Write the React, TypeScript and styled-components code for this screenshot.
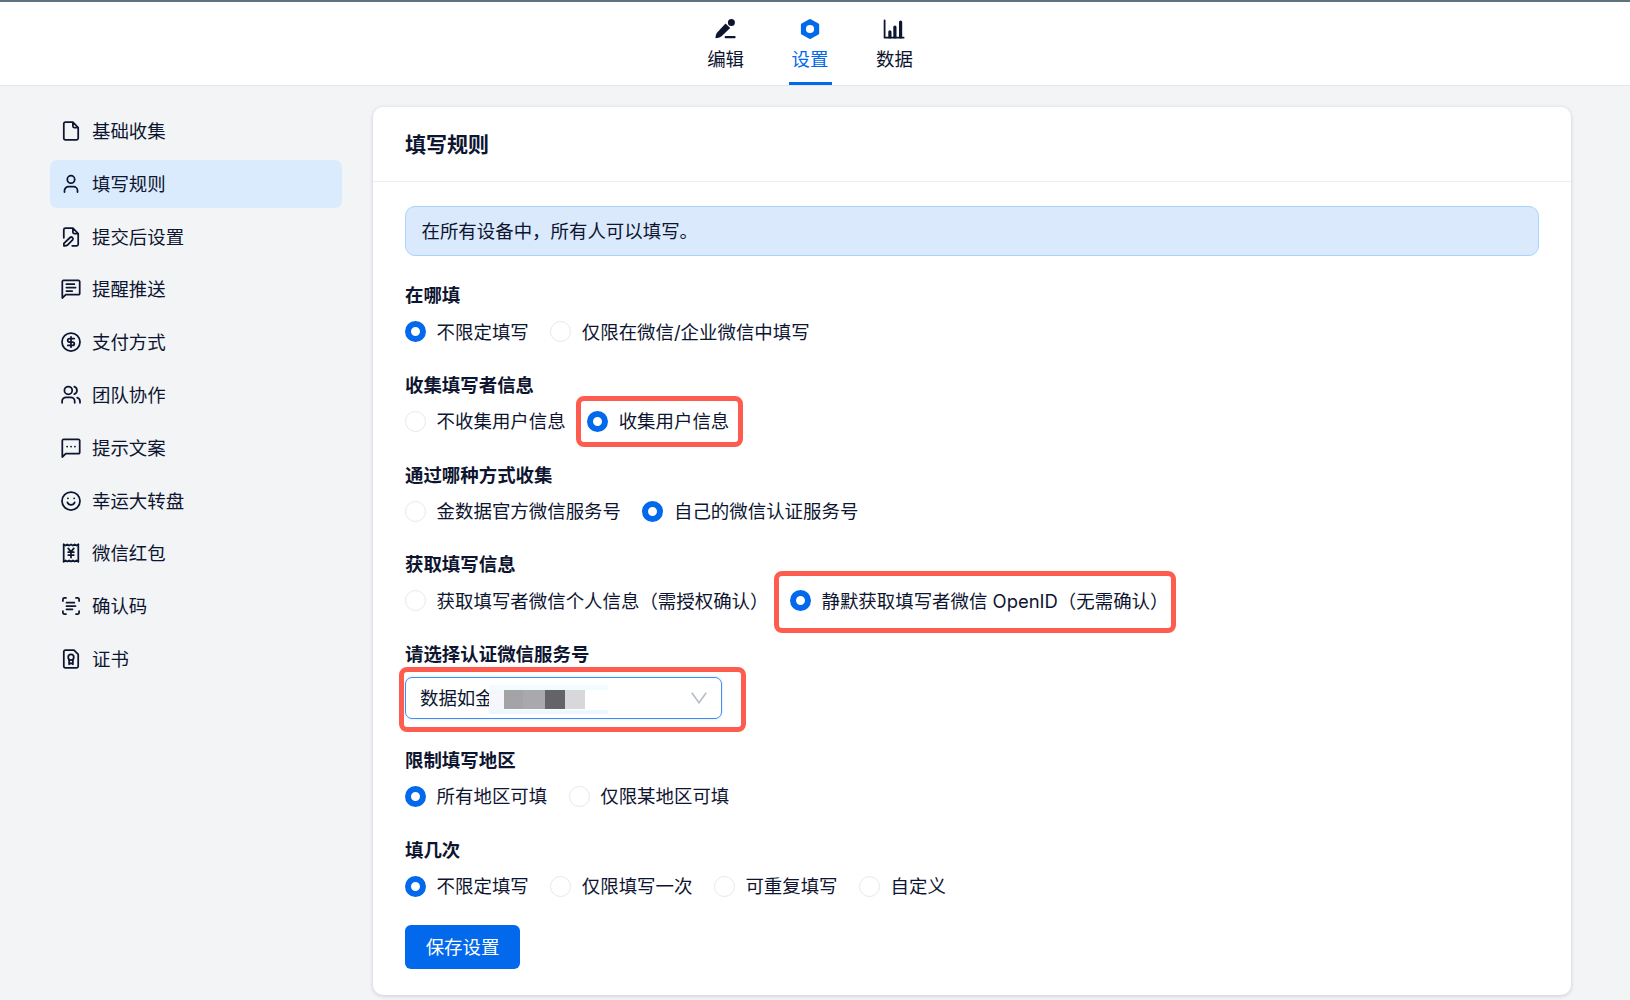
import React, { useState } from "react";
import styled, { createGlobalStyle } from "styled-components";

const GlobalStyle = createGlobalStyle`
  *, *::before, *::after { box-sizing: border-box; }
  body {
    margin: 0;
    background: #f2f4f6;
    color: #0e1530;
    font-family: Inter, "Noto Sans CJK SC", sans-serif;
    font-size: 18.45px;
    line-height: 28px;
    overflow: hidden;
  }
`;

const Page = styled.div`
  height: 1000px;
  display: flex;
  flex-direction: column;
  overflow: hidden;
`;

const Header = styled.header`
  flex: none;
  height: 86px;
  background: #fff;
  border-top: 2px solid #5e737d;
  border-bottom: 1px solid #e4e6e9;
  display: flex;
  justify-content: center;
  gap: 41.4px;
  padding-right: 10px;
`;

const Tab = styled.button<{ $active?: boolean }>`
  width: 43px;
  padding: 16px 0 0;
  border: 0;
  border-bottom: 3px solid ${(p) => (p.$active ? "#0268ec" : "transparent")};
  background: none;
  font: inherit;
  white-space: nowrap;
  color: ${(p) => (p.$active ? "#0268ec" : "#0e1530")};
  display: flex;
  flex-direction: column;
  align-items: center;
  gap: 5px;
  svg { display: block; flex: none; }
`;

const Body = styled.div`
  flex: 1;
  min-height: 0;
  display: flex;
  padding: 21px 59.5px 0 49.5px;
  gap: 31.5px;
`;

const Sidebar = styled.nav`
  flex: none;
  width: 292px;
  display: flex;
  flex-direction: column;
  gap: 4.8px;
`;

const NavItem = styled.a<{ $active?: boolean }>`
  height: 48px;
  flex: none;
  display: flex;
  align-items: center;
  gap: 11.5px;
  padding: 0 11px;
  border-radius: 7px;
  background: ${(p) => (p.$active ? "#daebfd" : "transparent")};
`;

const Icon = styled.svg`
  width: 20px;
  height: 20px;
  flex: none;
  fill: none;
  stroke: currentColor;
  stroke-width: 1.75;
  stroke-linecap: round;
  stroke-linejoin: round;
`;

const Card = styled.main`
  flex: 1;
  height: 888px;
  background: #fff;
  border-radius: 10px;
  box-shadow: 0 1px 4px rgba(20, 30, 50, 0.17);
`;

const CardTitle = styled.h1`
  margin: 0;
  height: 75px;
  padding: 0 32px;
  border-bottom: 1px solid #eaecef;
  font-size: 21px;
  font-weight: 700;
  line-height: 75px;
`;

const CardBody = styled.div`
  padding: 24px 32px 0;
`;

const Notice = styled.div`
  height: 50px;
  padding: 0 15.5px;
  border: 1px solid #a6d4fc;
  border-radius: 10px;
  background: #daeafc;
  line-height: 49px;
  margin-bottom: 25px;
`;

const Section = styled.section<{ $height?: number }>`
  height: ${(p) => p.$height ?? 89.8}px;
`;

const Label = styled.h2`
  margin: 0 0 8.5px;
  font-size: 18.45px;
  font-weight: 700;
  line-height: 28px;
`;

const Options = styled.div`
  display: flex;
  gap: 21.4px;
`;

const Option = styled.label`
  position: relative;
  display: flex;
  align-items: center;
  gap: 10.6px;
  height: 28px;
  white-space: nowrap;
`;

const Radio = styled.input`
  appearance: none;
  flex: none;
  width: 21px;
  height: 21px;
  margin: 0;
  border: 1px solid #e6e8eb;
  border-radius: 50%;
  background: #fff;
  &:checked { border: 6.3px solid #0268ec; }
`;

const Highlight = styled.span<{ $top: number; $right: number; $bottom: number; $left: number }>`
  position: absolute;
  top: ${(p) => -p.$top}px;
  right: ${(p) => -p.$right}px;
  bottom: ${(p) => -p.$bottom}px;
  left: ${(p) => -p.$left}px;
  border: 5px solid #ff5c50;
  border-radius: 8px;
  pointer-events: none;
`;

const SelectBox = styled.div`
  position: relative;
  width: 317px;
  height: 42.5px;
  margin-top: 1px;
  padding: 0 14px;
  border: 1px solid #3e8cf4;
  border-radius: 7px;
  box-shadow: 0 0 3px rgba(2, 104, 236, 0.2);
  display: flex;
  align-items: center;
  justify-content: space-between;
`;

const Value = styled.span`
  white-space: nowrap;
`;

const Mosaic = styled.span`
  position: absolute;
  left: 83px;
  top: 7px;
  width: 119px;
  height: 29px;
  padding-left: 15px;
  display: flex;
  align-items: center;
  border-top: 5px solid #f2fcff;
  border-bottom: 4px solid #ecf7fe;
  background: linear-gradient(90deg, #f6f7fd 15px, #fff 15px);
`;

const Pixel = styled.i<{ $w: number; $color: string }>`
  width: ${(p) => p.$w}px;
  height: 19px;
  background: ${(p) => p.$color};
`;

const SaveButton = styled.button`
  display: block;
  width: 115px;
  height: 43.5px;
  padding: 0;
  border: 0;
  border-radius: 6px;
  background: #0268ec;
  color: #fff;
  font: inherit;
`;

const FilePath = () => (
  <path d="M11.9 1.2H4.4a1.6 1.6 0 0 0-1.6 1.6v14.4a1.6 1.6 0 0 0 1.6 1.6h11.2a1.6 1.6 0 0 0 1.6-1.6V6.5zM11.9 1.4v3.9a1.2 1.2 0 0 0 1.2 1.2h3.9" />
);

const BubblePath = () => (
  <path d="M1.3 19V2.6A1.2 1.2 0 0 1 2.5 1.4h15a1.2 1.2 0 0 1 1.2 1.2v11.9a1.2 1.2 0 0 1-1.2 1.2H4.8L1.3 19Z" />
);

const NAV: { text: string; icon: React.ReactNode }[] = [
  { text: "基础收集", icon: <FilePath /> },
  {
    text: "填写规则",
    icon: (
      <>
        <circle cx="10" cy="5.4" r="3.7" />
        <path d="M3.5 18v-1.4a4 4 0 0 1 4-4h5a4 4 0 0 1 4 4V18" />
      </>
    ),
  },
  {
    text: "提交后设置",
    icon: (
      <>
        <path d="M2.8 10.8v-8a1.6 1.6 0 0 1 1.6-1.6h7.5l5.3 5.3v10.7a1.6 1.6 0 0 1-1.6 1.6h-4.4M11.9 1.4v3.9a1.2 1.2 0 0 0 1.2 1.2h3.9" />
        <path d="M2.9 18.9v-2.5l6.2-5.9c1.7-1.4 3.8.7 2.5 2.4l-5.4 5.4c-.8.6-2 .7-3.3.6Z" />
      </>
    ),
  },
  {
    text: "提醒推送",
    icon: (
      <>
        <BubblePath />
        <path d="M5.4 5.2h7.9M5.4 8.6h9.2M5.4 12h5.8" />
      </>
    ),
  },
  {
    text: "支付方式",
    icon: (
      <>
        <circle cx="10" cy="10" r="9" />
        <path d="M13.2 6.6H8.4a1.6 1.6 0 0 0 0 3.4h3.2a1.6 1.6 0 0 1 0 3.4H6.8M10 4.8v10.4" />
      </>
    ),
  },
  {
    text: "团队协作",
    icon: (
      <>
        <circle cx="7.3" cy="5.4" r="3.9" />
        <path d="M1.1 17.8v-1.5a4 4 0 0 1 4-4h4.6a4 4 0 0 1 4 4v1.5M13.3 1.7a3.9 3.9 0 0 1 0 7.4M16.2 12.6a4 4 0 0 1 2.8 3.8v1.4" />
      </>
    ),
  },
  {
    text: "提示文案",
    icon: (
      <>
        <BubblePath />
        <path d="M6.1 8.6h.1M10 8.6h.1M13.9 8.6h.1" />
      </>
    ),
  },
  {
    text: "幸运大转盘",
    icon: (
      <>
        <circle cx="10" cy="10" r="9" />
        <path d="M6.9 7.3h.1M13.1 7.3h.1M6.4 11.4c1.3 3.2 6 3.2 7.3 0" />
      </>
    ),
  },
  {
    text: "微信红包",
    icon: (
      <>
        <path d="M2.7 1.3v17.4M17.3 1.3v17.4" />
        <path d="m2.7 1.4 1.8 1.2 1.8-1.2 1.8 1.2L10 1.4l1.9 1.2 1.8-1.2 1.8 1.2 1.8-1.2M2.7 18.6l1.8-1.2 1.8 1.2 1.8-1.2 1.9 1.2 1.9-1.2 1.8 1.2 1.8-1.2 1.8 1.2" />
        <path d="m7.2 5.4 2.8 3.4 2.800-3.400M7.200 9.200h5.600M7.200 12h5.600M10 9v5.600" />
      </>
    ),
  },
  {
    text: "确认码",
    icon: <path d="M1.900 5V3.400a1.500 1.500 0 0 1 1.500-1.500H5M15 1.900h1.600a1.500 1.500 0 0 1 1.500 1.500V5M18.100 15v1.600a1.500 1.500 0 0 1-1.500 1.500H15M5 18.100H3.400a1.500 1.500 0 0 1-1.500-1.500V15M5.500 6.700h7.800M5.500 10h9M5.500 13.300h6" />,
  },
  {
    text: "证书",
    icon: (
      <>
        <path d="M13 1.200H4.400a1.600 1.600 0 0 0-1.600 1.600v14.400a1.600 1.600 0 0 0 1.600 1.600h11.200a1.600 1.600 0 0 0 1.600-1.600V5.400z" />
        <circle cx="10" cy="8.200" r="2.800" />
        <path d="M8.100 10.500v4.800l1.900-1.200 1.900 1.200v-4.800" />
      </>
    ),
  },
];

type Edges = [number, number, number, number];

function RadioGroup({
  name,
  options,
  initial,
  mark,
}: {
  name: string;
  options: string[];
  initial: number;
  mark?: Edges;
}) {
  const [value, setValue] = useState(initial);
  return (
    <Options role="radiogroup">
      {options.map((text, i) => (
        <Option key={text}>
          <Radio type="radio" name={name} checked={value === i} onChange={() => setValue(i)} />
          {text}
          {mark && i === initial && (
            <Highlight $top={mark[0]} $right={mark[1]} $bottom={mark[2]} $left={mark[3]} />
          )}
        </Option>
      ))}
    </Options>
  );
}

export default function App() {
  return (
    <Page>
      <GlobalStyle />
      <Header>
        <Tab>
          <svg width="22" height="22" viewBox="0 0 22 22" fill="currentColor">
            <circle cx="16.400" cy="4.400" r="3.500" />
            <path d="M10.500 5.500 15.200 10.100 6.500 18.300c-1.400 1.300-3.700 1.900-6 1.900 0-2.400.6-4.600 1.900-6Z" />
            <rect x="9.600" y="18" width="11" height="2.200" rx="1" />
          </svg>
          编辑
        </Tab>
        <Tab $active>
          <svg width="22" height="22" viewBox="0 0 22 22">
            <path
              fill="currentColor"
              fillRule="evenodd"
              d="M10.300 1.300a1.500 1.500 0 0 1 1.500 0l7.700 4.300a1.500 1.500 0 0 1 .7 1.300v8.300a1.500 1.500 0 0 1-.7 1.300l-7.700 4.300a1.500 1.500 0 0 1-1.500 0l-7.700-4.300a1.500 1.500 0 0 1-.7-1.300V6.900a1.500 1.500 0 0 1 .7-1.300ZM11 6.900a4.100 4.100 0 1 0 0 8.200 4.100 4.100 0 0 0 0-8.200Z"
            />
          </svg>
          设置
        </Tab>
        <Tab>
          <svg width="22" height="22" viewBox="0 0 22 22" fill="none" stroke="currentColor">
            <path d="M1.600 2.500v17.200h19" strokeWidth="1.800" strokeLinecap="round" strokeLinejoin="round" />
            <path d="M6.900 19v-5.200M11.900 19V9M17.600 19V4" strokeWidth="3.200" strokeLinecap="round" />
          </svg>
          数据
        </Tab>
      </Header>
      <Body>
        <Sidebar>
          {NAV.map((item) => (
            <NavItem key={item.text} $active={item.text === "填写规则"}>
              <Icon viewBox="0 0 20 20">{item.icon}</Icon>
              {item.text}
            </NavItem>
          ))}
        </Sidebar>
        <Card>
          <CardTitle>填写规则</CardTitle>
          <CardBody>
            <Notice>在所有设备中，所有人可以填写。</Notice>
            <Section>
              <Label>在哪填</Label>
              <RadioGroup name="where" initial={0} options={["不限定填写", "仅限在微信/企业微信中填写"]} />
            </Section>
            <Section>
              <Label>收集填写者信息</Label>
              <RadioGroup
                name="collect"
                initial={1}
                options={["不收集用户信息", "收集用户信息"]}
                mark={[11.5, 13.5, 11.5, 11]}
              />
            </Section>
            <Section>
              <Label>通过哪种方式收集</Label>
              <RadioGroup name="method" initial={1} options={["金数据官方微信服务号", "自己的微信认证服务号"]} />
            </Section>
            <Section>
              <Label>获取填写信息</Label>
              <RadioGroup
                name="info"
                initial={1}
                options={["获取填写者微信个人信息（需授权确认）", "静默获取填写者微信 OpenID（无需确认）"]}
                mark={[16, 7, 18, 16]}
              />
            </Section>
            <Section $height={105.7}>
              <Label>请选择认证微信服务号</Label>
              <SelectBox>
                <Value>数据如金</Value>
                <Mosaic>
                  <Pixel $w={19} $color="#a4a4a6" />
                  <Pixel $w={22} $color="#a9a9ad" />
                  <Pixel $w={20} $color="#636368" />
                  <Pixel $w={20} $color="#d8d8da" />
                </Mosaic>
                <svg width="16" height="12" viewBox="0 0 16 12" fill="none" stroke="#b3bbc8" strokeWidth="1.500">
                  <path d="m.8.8 7.200 10L15.200.8" />
                </svg>
                <Highlight $top={11} $right={25} $bottom={14} $left={7} />
              </SelectBox>
            </Section>
            <Section>
              <Label>限制填写地区</Label>
              <RadioGroup name="region" initial={0} options={["所有地区可填", "仅限某地区可填"]} />
            </Section>
            <Section>
              <Label>填几次</Label>
              <RadioGroup name="times" initial={0} options={["不限定填写", "仅限填写一次", "可重复填写", "自定义"]} />
            </Section>
            <SaveButton>保存设置</SaveButton>
          </CardBody>
        </Card>
      </Body>
    </Page>
  );
}
